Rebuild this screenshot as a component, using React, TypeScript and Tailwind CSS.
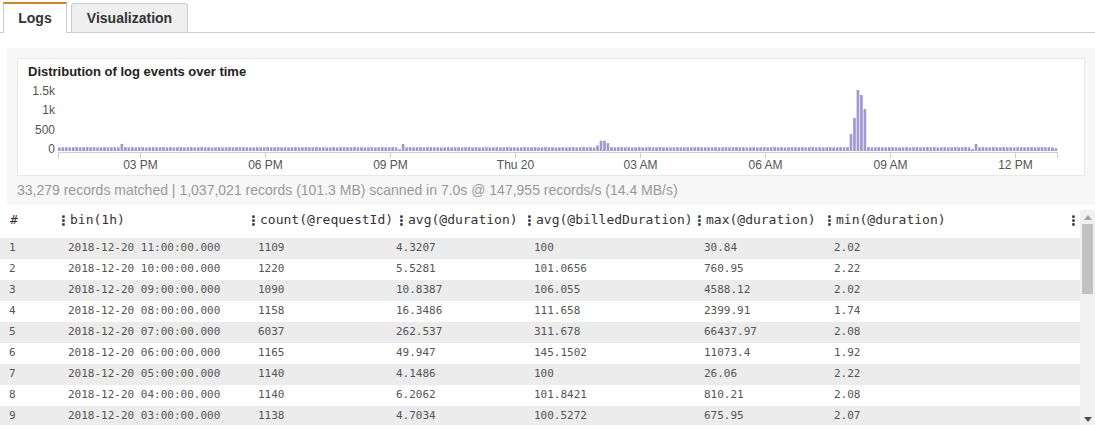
import React from "react";

const rows = [
  ["1", "2018-12-20 11:00:00.000", "1109", "4.3207", "100", "30.84", "2.02"],
  ["2", "2018-12-20 10:00:00.000", "1220", "5.5281", "101.0656", "760.95", "2.22"],
  ["3", "2018-12-20 09:00:00.000", "1090", "10.8387", "106.055", "4588.12", "2.02"],
  ["4", "2018-12-20 08:00:00.000", "1158", "16.3486", "111.658", "2399.91", "1.74"],
  ["5", "2018-12-20 07:00:00.000", "6037", "262.537", "311.678", "66437.97", "2.08"],
  ["6", "2018-12-20 06:00:00.000", "1165", "49.947", "145.1502", "11073.4", "1.92"],
  ["7", "2018-12-20 05:00:00.000", "1140", "4.1486", "100", "26.06", "2.22"],
  ["8", "2018-12-20 04:00:00.000", "1140", "6.2062", "101.8421", "810.21", "2.08"],
  ["9", "2018-12-20 03:00:00.000", "1138", "4.7034", "100.5272", "675.95", "2.07"],
];

const columns = ["bin(1h)", "count(@requestId)", "avg(@duration)", "avg(@billedDuration)", "max(@duration)", "min(@duration)"];
// left padding of the data cells, per column
const cellPad = ["pl-[8px]", "pl-[8px]", "pl-0 -ml-[2px]", "pl-[8px]", "pl-[8px]", "pl-[8px]"];

// 5 minute bins, 288 of them over the plot
const spikes: Record<number, number> = {
  18: 180,
  98: 45,
  99: 180,
  155: 140,
  156: 260,
  157: 260,
  158: 200,
  228: 430,
  229: 840,
  230: 1550,
  231: 1425,
  232: 1070,
  263: 50,
  264: 180,
  287: 70,
};
const bins = Array.from({ length: 288 }, (_, i) => spikes[i] ?? 90 + ((i * 37) % 11));

const xTicks = ["03 PM", "06 PM", "09 PM", "Thu 20", "03 AM", "06 AM", "09 AM", "12 PM"];
const yTicks = [
  { label: "1.5k", y: 12 },
  { label: "1k", y: 31 },
  { label: "500", y: 51 },
  { label: "0", y: 70 },
];

function Kebab() {
  return (
    <svg width="3" height="11" viewBox="0 0 3 11" className="shrink-0">
      <rect x="0.2" y="0.4" width="2.5" height="2.5" fill="#333" />
      <rect x="0.2" y="4.3" width="2.5" height="2.5" fill="#333" />
      <rect x="0.2" y="8.2" width="2.5" height="2.5" fill="#333" />
    </svg>
  );
}

function Histogram() {
  const x0 = 40;
  const step = 125 / 36;
  const base = 71;
  const k = 59 / 1500;
  const end = x0 + 288 * step;
  return (
    <svg width="1066" height="95" className="block">
      {bins.map((v, i) => {
        const h = v * k;
        return <rect key={i} x={x0 + i * step} y={base - h} width={step - 0.8} height={h} fill="#a09ad3" />;
      })}
      <line x1={x0} x2={end} y1="72.5" y2="72.5" stroke="#cfcfcf" />
      <line x1={x0 + 0.5} x2={x0 + 0.5} y1="72" y2="78" stroke="#cfcfcf" />
      <line x1={end - 0.5} x2={end - 0.5} y1="72" y2="78" stroke="#cfcfcf" />
      {xTicks.map((t, i) => {
        const x = 122.5 + i * 125;
        return (
          <g key={t}>
            <line x1={x} x2={x} y1="72" y2="78" stroke="#cfcfcf" />
            <text x={x} y="86" textAnchor="middle" dominantBaseline="middle" fontSize="12" fill="#555" fontFamily="'Liberation Sans', Arial, sans-serif">
              {t}
            </text>
          </g>
        );
      })}
      {yTicks.map((t) => (
        <text key={t.label} x="37" y={t.y} textAnchor="end" dominantBaseline="middle" fontSize="12" fill="#555" fontFamily="'Liberation Sans', Arial, sans-serif">
          {t.label}
        </text>
      ))}
    </svg>
  );
}

const grid = "grid grid-cols-[60px_190px_148px_128px_170px_130px_1fr_14px]";

export default function App() {
  return (
    <div className="h-[425px] w-[1095px] overflow-hidden bg-white font-['Liberation_Sans',Arial,sans-serif] text-[#333]">
      {/* tabs */}
      <div className="flex h-[33px] items-end border-b border-[#cccccc] pl-[3px]">
        <div className="-mb-px flex h-[31px] w-[64px] items-center justify-center border-x border-t-2 border-x-[#cccccc] border-t-[#dd7f22] bg-white text-[14px] font-bold">
          Logs
        </div>
        <div className="ml-[4px] flex h-[29px] w-[117px] items-center justify-center rounded-t-[3px] border border-b-0 border-[#cccccc] bg-[#efefef] text-[14px] font-bold">
          Visualization
        </div>
      </div>

      {/* chart panel */}
      <div className="ml-[7px] mt-[15px] bg-[#f7f7f7] px-[10px] pb-[5px] pt-[10px]">
        <div className="h-[118px] border border-[#e8e8e8] bg-white">
          <div className="pl-[10px] pt-[5px] text-[13px] font-bold leading-[16px] text-[#222]">
            Distribution of log events over time
          </div>
          <Histogram />
        </div>
        <div className="mt-[4px] text-[14px] leading-[20px] text-[#999]">
          33,279 records matched | 1,037,021 records (101.3 MB) scanned in 7.0s @ 147,955 records/s (14.4 MB/s)
        </div>
      </div>

      {/* results table */}
      <div className="flex font-['DejaVu_Sans_Mono',monospace]">
        <div className="flex-1">
          <div className={`${grid} h-[33px] items-start pt-[6px] text-[13px] leading-[18px] text-[#333]`}>
            <div className="h-[18px] pl-[10px]">#</div>
            {columns.map((c) => (
              <div key={c} className="flex h-[18px] items-center gap-[5px] pl-[2px]">
                <Kebab />
                <span>{c}</span>
              </div>
            ))}
            <div className="flex h-[18px] items-center pl-[6px]">
              <Kebab />
            </div>
          </div>
          {rows.map((r, i) => (
            <div
              key={r[0]}
              className={`${grid} h-[21px] items-center text-[11px] text-[#555] ${i % 2 === 0 ? "bg-[#ececec]" : "bg-white"}`}
            >
              <div className="pl-[9px]">{r[0]}</div>
              {r.slice(1).map((v, j) => (
                <div key={j} className={cellPad[j]}>
                  {v}
                </div>
              ))}
              <div />
            </div>
          ))}
        </div>

        {/* scrollbar */}
        <div className="mt-[5px] flex w-[15px] flex-col items-center bg-[#f1f1f1]">
          <div className="flex h-[14px] items-center justify-center">
            <svg width="8" height="5" viewBox="0 0 8 5">
              <path d="M0 5 L4 0 L8 5 Z" fill="#a3a3a3" />
            </svg>
          </div>
          <div className="h-[70px] w-[11px] bg-[#c1c1c1]" />
          <div className="flex-1" />
          <div className="flex h-[16px] items-center justify-center">
            <svg width="8" height="5" viewBox="0 0 8 5">
              <path d="M0 0 L4 5 L8 0 Z" fill="#505050" />
            </svg>
          </div>
        </div>
      </div>
    </div>
  );
}
